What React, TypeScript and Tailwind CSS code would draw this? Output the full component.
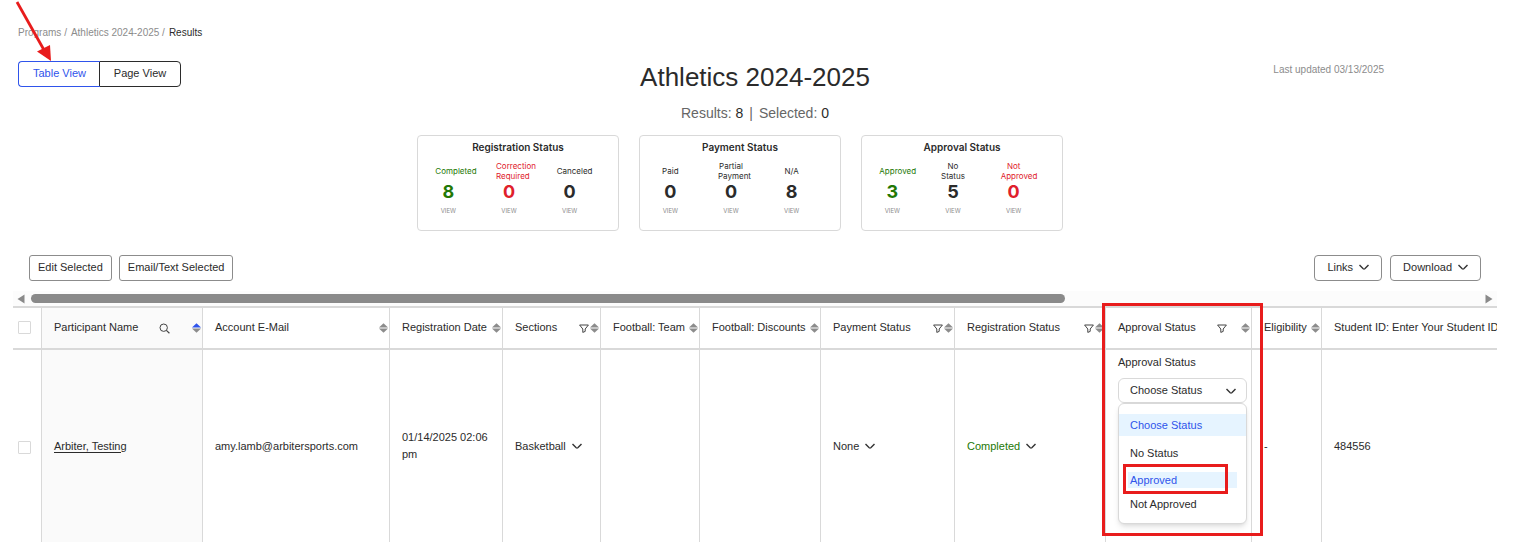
import { useState } from 'react'
import type { ReactNode } from 'react'

interface statItem {
  label: string
  value: number
  color: string
}

interface statusCardProps {
  title: string
  items: statItem[]
}

const green = 'text-[#237804]'
const red = 'text-[#e0202b]'
const dark = 'text-[#2b2b2b]'

const cards: statusCardProps[] = [
  {
    title: 'Registration Status',
    items: [
      { label: 'Completed', value: 8, color: green },
      { label: 'Correction Required', value: 0, color: red },
      { label: 'Canceled', value: 0, color: dark },
    ],
  },
  {
    title: 'Payment Status',
    items: [
      { label: 'Paid', value: 0, color: dark },
      { label: 'Partial Payment', value: 0, color: dark },
      { label: 'N/A', value: 8, color: dark },
    ],
  },
  {
    title: 'Approval Status',
    items: [
      { label: 'Approved', value: 3, color: green },
      { label: 'No Status', value: 5, color: dark },
      { label: 'Not Approved', value: 0, color: red },
    ],
  },
]

function StatusCard({ title, items }: statusCardProps) {
  return (
    <section className="w-[202px] h-24 border border-[#d9d9d9] rounded font-['Inter',sans-serif]">
      <h2 className="text-[10px] leading-4 font-semibold text-center mt-[3px]">{title}</h2>
      <div className="grid grid-cols-3 pr-[18px] mt-1.5">
        {items.map((item) => (
          <div key={item.label} className={`flex flex-col items-center ${item.color}`}>
            <p className="w-[26px] h-5 flex items-center text-[8px] leading-[10px]">
              <span className="w-full text-center">{item.label}</span>
            </p>
            <p className="text-lg leading-[22px] font-bold">{item.value}</p>
            <a href="#" className="text-[6px] leading-4 text-[#8c8c8c]">
              VIEW
            </a>
          </div>
        ))}
      </div>
    </section>
  )
}

function Chevron() {
  return (
    <svg className="shrink-0" width="10" height="7" viewBox="0 0 10 7" fill="none" stroke="#333" strokeWidth="1.4" aria-hidden="true">
      <path d="M0.5 1 L4.2 4.8 Q5 5.4 5.8 4.8 L9.5 1" />
    </svg>
  )
}

function SortIcon({ active }: { active?: boolean }) {
  return (
    <svg className="shrink-0" width="9" height="10" viewBox="0 0 9 10" aria-hidden="true">
      <path d="M4.5 0.3 L9 4.6 H0 Z" fill={active ? '#2f54eb' : '#8c8c8c'} />
      <path d="M0 5.6 H9 L4.5 9.8 Z" fill="#8c8c8c" />
    </svg>
  )
}

function FilterIcon() {
  return (
    <svg className="shrink-0" width="10" height="9" viewBox="0 0 10 9" fill="none" stroke="#444" strokeWidth="1" strokeLinejoin="round" aria-hidden="true">
      <path d="M0.6 1 H9.4 L6.2 5 V7.4 L3.8 8.4 V5 Z" />
    </svg>
  )
}

function SearchIcon() {
  return (
    <svg className="shrink-0" width="11" height="11" viewBox="0 0 11 11" fill="none" stroke="#444" aria-hidden="true">
      <circle cx="4.7" cy="4.7" r="3.7" />
      <path d="M7.4 7.4 L10.4 10.2" strokeWidth="1.2" />
    </svg>
  )
}

interface headCellProps {
  label: string
  icon?: ReactNode
  wide?: boolean
  active?: boolean
  last?: boolean
  shaded?: boolean
}

function HeadCell({ label, icon, wide, active, last, shaded }: headCellProps) {
  return (
    <th
      scope="col"
      className={`h-11 p-0 pb-0.5 pl-3 pr-px border-y-2 border-[#d9d9d9] font-normal text-left whitespace-nowrap overflow-hidden ${
        last ? '' : 'border-r'
      } ${shaded ? 'bg-[#fafafa]' : ''}`}
    >
      <div className="flex items-center">
        <span className="leading-4">{label}</span>
        {!last && (
          <span className={`flex items-center ml-auto pt-0.5 ${wide ? 'gap-3.5' : 'gap-px'}`}>
            {icon}
            <SortIcon active={active} />
          </span>
        )}
      </div>
    </th>
  )
}

function Cell({ children, className = '' }: { children?: ReactNode; className?: string }) {
  return <td className={`h-48 p-0 pl-3 border-r border-[#d9d9d9] ${className}`}>{children}</td>
}

function Checkbox({ label }: { label: string }) {
  return (
    <input
      type="checkbox"
      aria-label={label}
      className="block appearance-none size-[13px] border border-[#d9d9d9] rounded-[1px] bg-white checked:bg-[#2f54eb]"
    />
  )
}

function StatusPicker() {
  const [status, setStatus] = useState('Choose Status')

  return (
    <div className="relative h-48 pt-1 pr-1">
      <p id="approval-label" className="leading-4">
        Approval Status
      </p>
      <button
        aria-labelledby="approval-label"
        aria-expanded="true"
        className="flex items-center justify-between w-full h-[25px] mt-2 pl-[11px] pr-2.5 border border-[#d9d9d9] rounded-md bg-white"
      >
        {status}
        <span className="pt-0.5">
          <Chevron />
        </span>
      </button>
      <div className="h-[121px] pt-2.5 border border-[#d9d9d9] rounded-md bg-white shadow-md">
        <button
          className="block w-full h-[22px] pl-[11px] text-left bg-[#e6f4ff] text-[#2f54eb]"
          onClick={() => setStatus('Choose Status')}
        >
          Choose Status
        </button>
        <button className="block w-full h-4 mt-[9px] pl-[11px] text-left" onClick={() => setStatus('No Status')}>
          No Status
        </button>
        <div className="relative mt-[11px] px-[9px]">
          <button
            className="block w-full h-4 pl-0.5 pb-0.5 text-left bg-[#e6f4ff] text-[#2f54eb]"
            onClick={() => setStatus('Approved')}
          >
            Approved
          </button>
          <div className="absolute -top-2 left-1 w-[105px] h-[30px] border-3 border-[#e81c1c] pointer-events-none" />
        </div>
        <button className="block w-full h-4 mt-2 pl-[11px] text-left" onClick={() => setStatus('Not Approved')}>
          Not Approved
        </button>
      </div>
      <div className="absolute -top-[47px] -left-4 -right-3 h-[233px] border-3 border-[#e81c1c] pointer-events-none" />
    </div>
  )
}

export default function App() {
  return (
    <main className="relative pl-[13px] pr-[38px] pt-[25px] bg-white font-['Liberation_Sans',Arial,sans-serif] text-[11px] text-[#2b2b2b]">
      <nav aria-label="Breadcrumb" className="flex gap-1 pl-[5px] text-[10px] leading-4 text-[#8c8c8c]">
        <span>
          <a href="#">Programs</a> /
        </span>
        <span>
          <a href="#">Athletics 2024-2025</a> /
        </span>
        <span className="text-[#2b2b2b]">Results</span>
      </nav>
      <svg className="absolute top-0 left-0 pointer-events-none" width="60" height="64" viewBox="0 0 60 64" aria-hidden="true">
        <path d="M17 2 L44 50" stroke="#e81c1c" strokeWidth="2.8" />
        <path d="M51 61 L37 51.5 L50 45 Z" fill="#e81c1c" />
      </svg>

      <header className="grid grid-cols-[1fr_auto_1fr] items-start mt-5">
        <div className="flex pl-[5px]">
          <button className="relative z-10 w-[82px] h-[26px] pb-0.5 border border-r-0 border-[#2f54eb] rounded-l text-[#2f54eb]">
            Table View
          </button>
          <button className="w-[82px] h-[26px] pb-0.5 -ml-px border border-[#2b2b2b] rounded-r">Page View</button>
        </div>
        <div className="text-center">
          <h1 className="text-[26px] leading-8">Athletics 2024-2025</h1>
          <p className="mt-2.5 text-sm leading-5 text-[#666]">
            Results: <span className="text-[#2b2b2b]">8</span>
            <span className="mx-1.5">|</span>
            Selected: <span className="text-[#2b2b2b]">0</span>
          </p>
        </div>
        <p className="pr-[113px] text-right text-[10px] leading-[18px] text-[#8c8c8c]">Last updated 03/13/2025</p>
      </header>

      <div className="flex justify-center gap-5 mt-3 pr-[30px]">
        {cards.map((card) => (
          <StatusCard key={card.title} title={card.title} items={card.items} />
        ))}
      </div>

      <div className="flex justify-between mt-6 pl-4 pr-4">
        <div className="flex gap-[7px]">
          <button className="h-[26px] px-2 pb-0.5 border border-[#8c8c8c] rounded-[3px]">Edit Selected</button>
          <button className="h-[26px] px-2 pb-0.5 border border-[#8c8c8c] rounded-[3px]">Email/Text Selected</button>
        </div>
        <div className="flex gap-2">
          <button className="flex items-center gap-1.5 h-[26px] px-3 pb-0.5 border border-[#8c8c8c] rounded">
            Links <Chevron />
          </button>
          <button className="flex items-center gap-1.5 h-[26px] px-3 pb-0.5 border border-[#8c8c8c] rounded">
            Download <Chevron />
          </button>
        </div>
      </div>

      <div className="mt-2.5 overflow-hidden">
        <div className="flex items-center justify-between h-[15px] px-1 bg-[#fcfcfc]">
          <svg width="8" height="10" viewBox="0 0 8 10" aria-hidden="true">
            <path d="M0.5 5 L7.5 0.5 V9.5 Z" fill="#8a8a8a" />
          </svg>
          <div className="flex-1 mx-1.5">
            <div className="w-5/7 h-[9px] rounded-full bg-[#8a8a8a]" />
          </div>
          <svg width="8" height="10" viewBox="0 0 8 10" aria-hidden="true">
            <path d="M7.5 5 L0.5 0.5 V9.5 Z" fill="#8a8a8a" />
          </svg>
        </div>

        <table className="w-full table-fixed border-separate border-spacing-0">
          <colgroup>
            <col className="w-[29px]" />
            <col className="w-[161px]" />
            <col className="w-[187px]" />
            <col className="w-[113px]" />
            <col className="w-[98px]" />
            <col className="w-[99px]" />
            <col className="w-[121px]" />
            <col className="w-[134px]" />
            <col className="w-[151px]" />
            <col className="w-[146px]" />
            <col className="w-[70px]" />
            <col />
          </colgroup>
          <thead>
            <tr>
              <th className="h-11 p-0 pb-0.5 pl-[5px] border-y-2 border-r border-[#d9d9d9]">
                <Checkbox label="Select all" />
              </th>
              <HeadCell
                label="Participant Name"
                shaded
                active
                icon={
                  <span className="pr-2">
                    <SearchIcon />
                  </span>
                }
                wide
              />
              <HeadCell label="Account E-Mail" />
              <HeadCell label="Registration Date" />
              <HeadCell label="Sections" icon={<FilterIcon />} />
              <HeadCell label="Football: Team" />
              <HeadCell label="Football: Discounts" />
              <HeadCell label="Payment Status" icon={<FilterIcon />} />
              <HeadCell label="Registration Status" icon={<FilterIcon />} />
              <HeadCell label="Approval Status" icon={<FilterIcon />} wide />
              <HeadCell label="Eligibility" />
              <HeadCell label="Student ID: Enter Your Student ID" last />
            </tr>
          </thead>
          <tbody>
            <tr>
              <td className="h-48 p-0 pt-0.5 pl-[5px] border-r border-[#d9d9d9]">
                <Checkbox label="Select Arbiter, Testing" />
              </td>
              <Cell className="bg-[#fafafa]">
                <a href="#" className="underline underline-offset-2">
                  Arbiter, Testing
                </a>
              </Cell>
              <Cell>amy.lamb@arbitersports.com</Cell>
              <Cell className="pr-3 leading-[17px]">01/14/2025 02:06 pm</Cell>
              <Cell>
                <button className="flex items-center gap-1.5">
                  Basketball <Chevron />
                </button>
              </Cell>
              <Cell />
              <Cell />
              <Cell>
                <button className="flex items-center gap-1.5">
                  None <Chevron />
                </button>
              </Cell>
              <Cell>
                <button className="flex items-center gap-1.5 text-[#237804]">
                  Completed <Chevron />
                </button>
              </Cell>
              <Cell className="align-top">
                <StatusPicker />
              </Cell>
              <Cell>-</Cell>
              <td className="h-48 p-0 pl-3">484556</td>
            </tr>
          </tbody>
        </table>
      </div>
    </main>
  )
}
